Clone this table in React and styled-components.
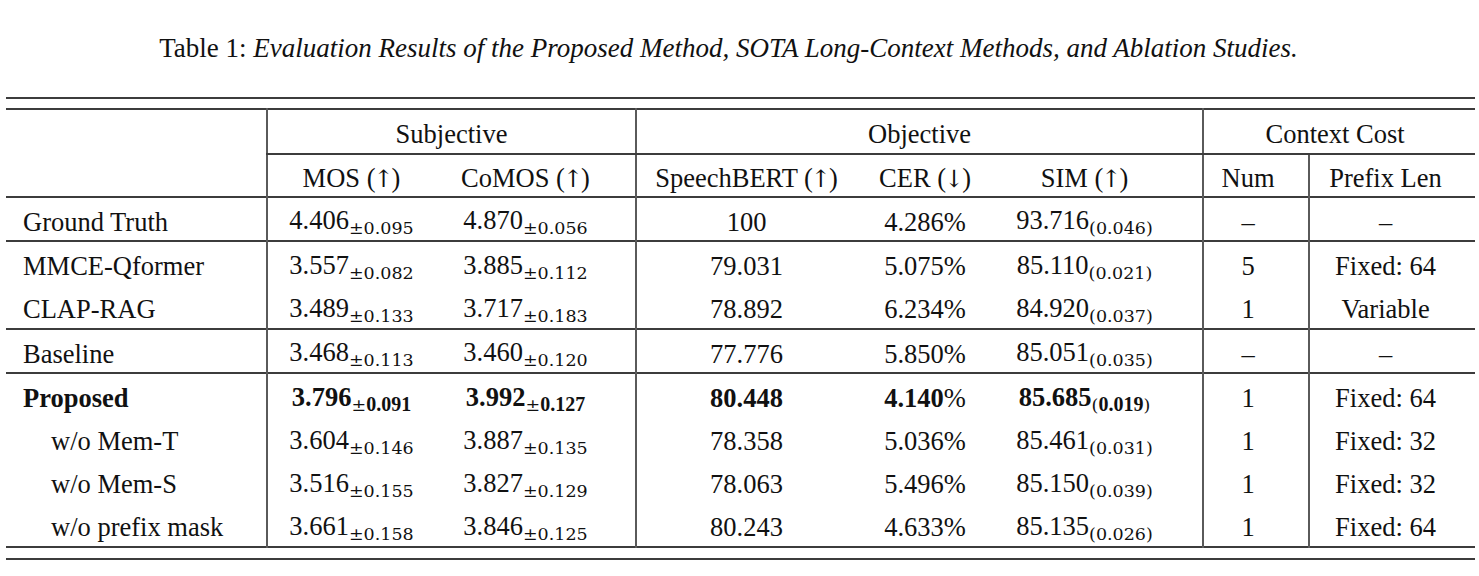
import React from 'react';
import styled, { createGlobalStyle } from 'styled-components';

const GlobalStyle = createGlobalStyle`
  html, body {
    margin: 0;
    padding: 0;
    background: #ffffff;
  }
  body {
    font-family: "Liberation Serif", "Times New Roman", serif;
    color: #111;
  }
`;

const Page = styled.div`
  width: 1479px;
  padding: 30px 4px 0 6px;
  box-sizing: border-box;
`;

const Caption = styled.div`
  font-size: 27px;
  line-height: 36px;
  text-align: center;
  padding-right: 24px;
  margin-bottom: 31px;
  color: #111;

  em {
    font-style: italic;
  }
`;

const Rules = styled.div`
  border-top: 2px solid #3c3c3c;
  border-bottom: 2px solid #3c3c3c;
  padding: 9px 0 10px;
`;

const Table = styled.table`
  width: 1469px;
  table-layout: fixed;
  border-collapse: collapse;
  border-top: 2px solid #3c3c3c;
  border-bottom: 2px solid #3c3c3c;
  font-size: 26.5px;
`;

const Row = styled.tr`
  height: ${p => p.$h}px;
  border-bottom: ${p => (p.$rule ? '2px solid #3c3c3c' : 'none')};
`;

const Cell = styled.td`
  padding: 5px ${p => p.$shift || 0}px 0 0;
  text-align: center;
  vertical-align: middle;
  white-space: nowrap;
  line-height: 30px;
  border-left: ${p => (p.$line ? '2px solid #5a5a5a' : 'none')};
  border-bottom: ${p => (p.$under ? '2px solid #3c3c3c' : 'none')};
`;

const Label = styled(Cell)`
  text-align: left;
  padding-left: ${p => (p.$indent ? 45 : 17)}px;
  font-weight: ${p => (p.$bold ? 700 : 400)};
`;

const Main = styled.span`
  font-weight: ${p => (p.$bold ? 700 : 400)};
`;

const Arrow = styled.span`
  font-family: "DejaVu Serif", serif;
  font-size: 24px;
  line-height: 1;
  margin: 0 -2px;
`;

const Sub = styled.span`
  font-family: "DejaVu Serif", serif;
  font-size: 17.5px;
  vertical-align: -5px;
  line-height: 1;
`;

const SubNum = styled.span`
  ${p =>
    p.$bold &&
    `
    font-family: "Liberation Serif", serif;
    font-weight: 700;
    font-size: 20px;
  `}
`;

const cols = [261, 168, 201, 220, 138, 209, 106, 166];

const rows = [
  { name: 'Ground Truth', mos: ['4.406', '0.095'], comos: ['4.870', '0.056'], sb: '100', cer: '4.286', sim: ['93.716', '0.046'], num: '–', pre: '–', rule: true, h: 44 },
  { name: 'MMCE-Qformer', mos: ['3.557', '0.082'], comos: ['3.885', '0.112'], sb: '79.031', cer: '5.075', sim: ['85.110', '0.021'], num: '5', pre: 'Fixed: 64', h: 44 },
  { name: 'CLAP-RAG', mos: ['3.489', '0.133'], comos: ['3.717', '0.183'], sb: '78.892', cer: '6.234', sim: ['84.920', '0.037'], num: '1', pre: 'Variable', rule: true, h: 44 },
  { name: 'Baseline', mos: ['3.468', '0.113'], comos: ['3.460', '0.120'], sb: '77.776', cer: '5.850', sim: ['85.051', '0.035'], num: '–', pre: '–', rule: true, h: 44 },
  { name: 'Proposed', bold: true, mos: ['3.796', '0.091'], comos: ['3.992', '0.127'], sb: '80.448', cer: '4.140', sim: ['85.685', '0.019'], num: '1', pre: 'Fixed: 64', h: 43.5 },
  { name: 'w/o Mem-T', indent: true, mos: ['3.604', '0.146'], comos: ['3.887', '0.135'], sb: '78.358', cer: '5.036', sim: ['85.461', '0.031'], num: '1', pre: 'Fixed: 32', h: 43.5 },
  { name: 'w/o Mem-S', indent: true, mos: ['3.516', '0.155'], comos: ['3.827', '0.129'], sb: '78.063', cer: '5.496', sim: ['85.150', '0.039'], num: '1', pre: 'Fixed: 32', h: 43.5 },
  { name: 'w/o prefix mask', indent: true, mos: ['3.661', '0.158'], comos: ['3.846', '0.125'], sb: '80.243', cer: '4.633', sim: ['85.135', '0.026'], num: '1', pre: 'Fixed: 64', h: 43.5 },
];

function Value({ v, sub, paren, bold }) {
  return (
    <>
      <Main $bold={bold}>{v}</Main>
      <Sub>
        {paren ? '(' : '±'}
        <SubNum $bold={bold}>{sub}</SubNum>
        {paren ? ')' : ''}
      </Sub>
    </>
  );
}

function Head({ text, dir }) {
  return (
    <>
      {text} (<Arrow>{dir}</Arrow>)
    </>
  );
}

export default function App() {
  return (
    <Page>
      <GlobalStyle />
      <Caption>
        Table 1: <em>Evaluation Results of the Proposed Method, SOTA Long-Context Methods, and Ablation Studies.</em>
      </Caption>
      <Rules>
        <Table>
          <colgroup>
            {cols.map((w, i) => (
              <col key={i} style={{ width: w }} />
            ))}
          </colgroup>
          <thead>
            <Row $h={45}>
              <Label rowSpan={2} />
              <Cell colSpan={2} $line $under>Subjective</Cell>
              <Cell colSpan={3} $line $under>Objective</Cell>
              <Cell colSpan={2} $line $under $shift={9}>Context Cost</Cell>
            </Row>
            <Row $h={43} $rule>
              <Cell $line><Head text="MOS" dir="↑" /></Cell>
              <Cell $shift={19}><Head text="CoMOS" dir="↑" /></Cell>
              <Cell $line><Head text="SpeechBERT" dir="↑" /></Cell>
              <Cell><Head text="CER" dir="↓" /></Cell>
              <Cell $shift={27}><Head text="SIM" dir="↑" /></Cell>
              <Cell $line $shift={16}>Num</Cell>
              <Cell $line $shift={14}>Prefix Len</Cell>
            </Row>
          </thead>
          <tbody>
            {rows.map(r => (
              <Row key={r.name} $h={r.h} $rule={r.rule}>
                <Label $indent={r.indent} $bold={r.bold}>{r.name}</Label>
                <Cell $line>
                  <Value v={r.mos[0]} sub={r.mos[1]} bold={r.bold} />
                </Cell>
                <Cell $shift={19}>
                  <Value v={r.comos[0]} sub={r.comos[1]} bold={r.bold} />
                </Cell>
                <Cell $line>
                  <Main $bold={r.bold}>{r.sb}</Main>
                </Cell>
                <Cell>
                  <Main $bold={r.bold}>{r.cer}</Main>%
                </Cell>
                <Cell $shift={27}>
                  <Value v={r.sim[0]} sub={r.sim[1]} paren bold={r.bold} />
                </Cell>
                <Cell $line $shift={16}>{r.num}</Cell>
                <Cell $line $shift={14}>{r.pre}</Cell>
              </Row>
            ))}
          </tbody>
        </Table>
      </Rules>
    </Page>
  );
}
